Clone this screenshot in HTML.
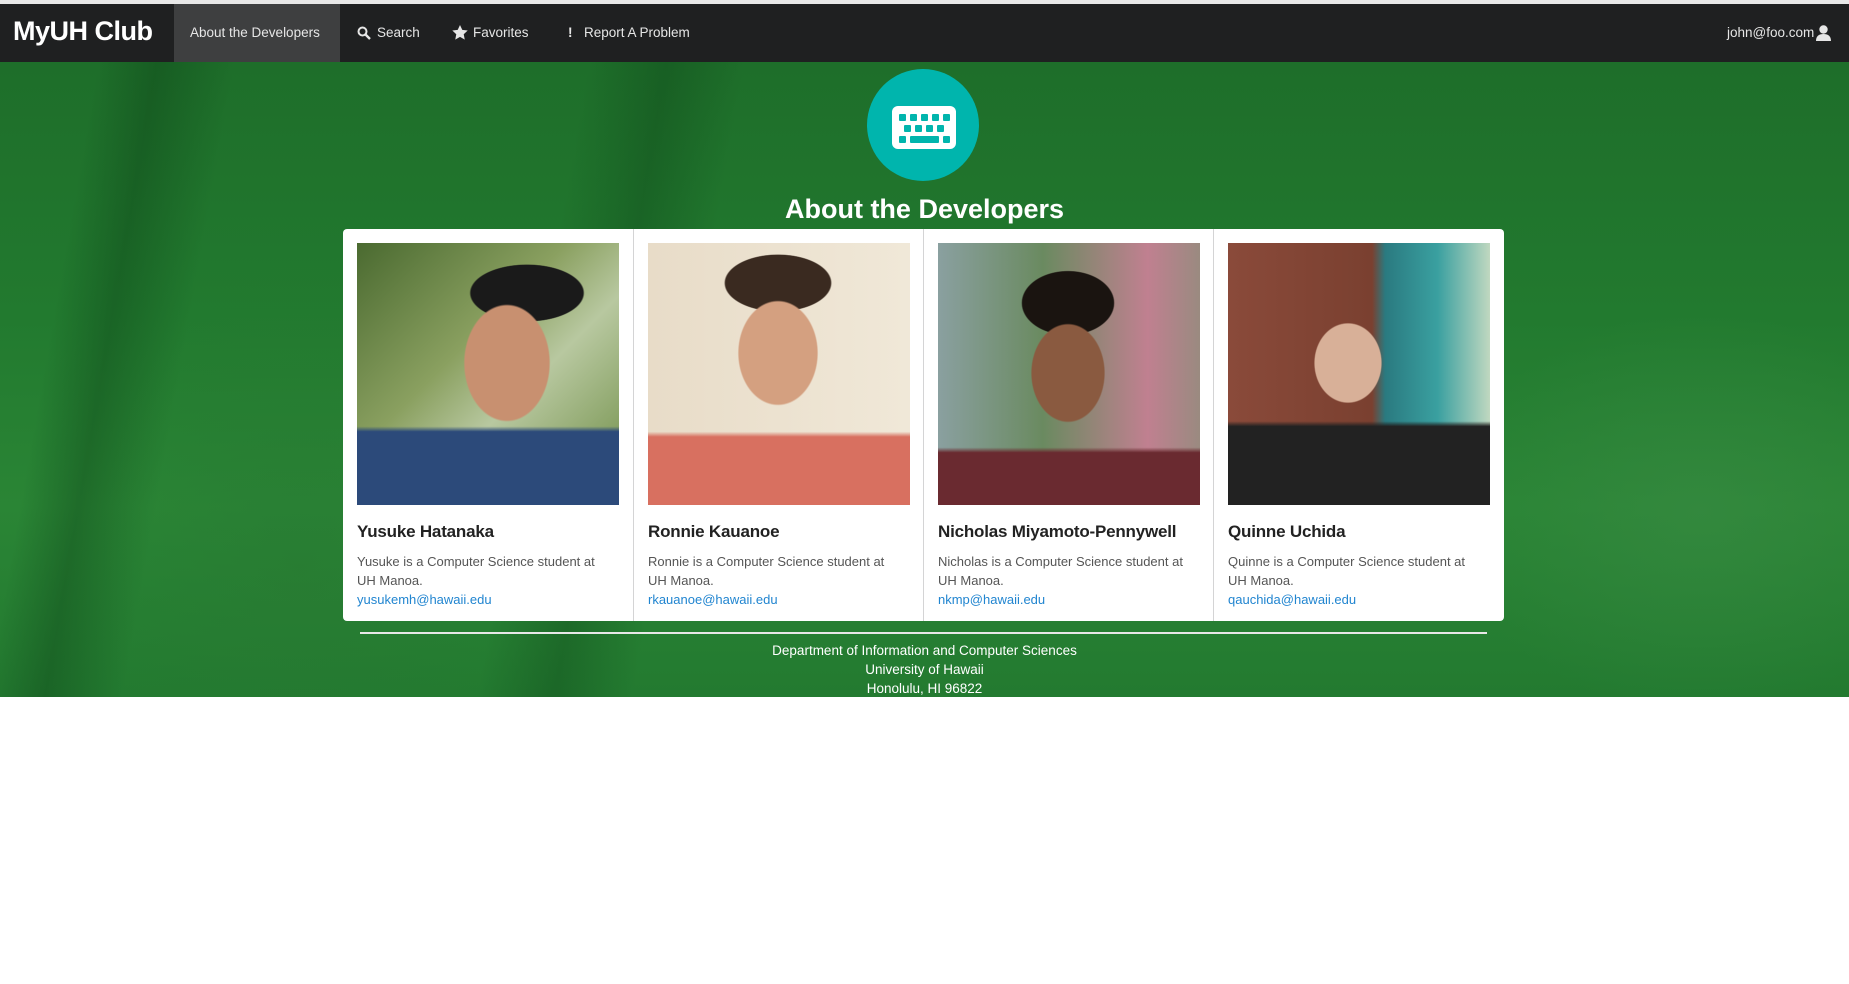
<!DOCTYPE html>
<html><head><meta charset="utf-8"><style>
*{margin:0;padding:0;box-sizing:border-box}
body{width:1849px;height:984px;background:#fff;font-family:"Liberation Sans",sans-serif;position:relative;overflow:hidden}
.top{position:absolute;left:0;top:0;width:1849px;height:4px;background:#e8e8e8}
.nav{position:absolute;left:0;top:4px;width:1849px;height:58px;background:#1f2021;color:#e6e6e6;font-size:13.5px}
.nav span{position:absolute;top:21px;white-space:nowrap}
.brand{font-size:27px!important;font-weight:bold;color:#fff;top:12px!important;left:13px;letter-spacing:-0.5px}
.active{position:absolute;left:174px;top:0;width:166px;height:58px;background:#3e3f40}
.hero{position:absolute;left:0;top:62px;width:1849px;height:635px;overflow:hidden;
background:
radial-gradient(ellipse 200px 300px at 300px 500px,rgba(40,120,50,.5),transparent),
radial-gradient(ellipse 250px 200px at 1700px 450px,rgba(60,140,70,.5),transparent),
linear-gradient(100deg,transparent 5%,rgba(10,60,20,.35) 8%,transparent 12%,transparent 30%,rgba(10,60,20,.3) 34%,transparent 38%),
linear-gradient(180deg,#1e6e2a 0%,#227a2f 40%,#2a8535 70%,#237a30 100%)}
.circle{position:absolute;left:867px;top:7px;width:112px;height:112px;border-radius:50%;background:#00b5ad}
h1{position:absolute;left:0;width:1849px;text-align:center;font-size:27px;color:#fff;font-weight:bold}
.cards{position:absolute;left:343px;top:229px;width:1161px;height:392px;background:#fff;border-radius:4px}
.card{position:absolute;top:0;width:290px;height:392px;border-left:1px solid #d4d4d5}
.card:first-child{border-left:none}
.ph{position:absolute;left:14px;top:14px;width:262px;height:262px}
.nm{position:absolute;left:14px;top:293px;font-size:17px;font-weight:bold;color:#222;white-space:nowrap;letter-spacing:-0.2px}
.ds{position:absolute;left:14px;top:323px;font-size:13px;line-height:19px;color:#555;width:250px}
.ds a{color:#2185d0;text-decoration:none}
.hr{position:absolute;left:360px;width:1127px;height:2px;background:#e8e8e8}
.ft{position:absolute;left:0;width:1849px;text-align:center;color:#fff;font-size:13.5px;line-height:19px}
</style></head><body>
<div class="top"></div>
<div class="nav">
<div class="active"></div>
<span class="brand">MyUH Club</span>
<span style="left:190px">About the Developers</span>
<svg style="position:absolute;left:357px;top:22px" width="14" height="14" viewBox="0 0 14 14"><circle cx="5.5" cy="5.5" r="4" stroke="#e6e6e6" stroke-width="2" fill="none"/><path d="M8.5 8.5L13 13" stroke="#e6e6e6" stroke-width="2.4"/></svg>
<span style="left:377px">Search</span>
<svg style="position:absolute;left:452px;top:21px" width="16" height="15" viewBox="0 0 24 23"><path d="M12 0l3.5 7.5 8.3 1-6.1 5.7 1.6 8.2L12 18.3 4.7 22.4l1.6-8.2L.2 8.5l8.3-1z" fill="#e6e6e6"/></svg>
<span style="left:473px">Favorites</span>
<span style="left:568px;font-weight:bold">!</span>
<span style="left:584px">Report A Problem</span>
<span style="left:1727px">john@foo.com</span>
<svg style="position:absolute;left:1816px;top:21px" width="15" height="16" viewBox="0 0 15 16"><circle cx="7.5" cy="4.5" r="4.2" fill="#e6e6e6"/><path d="M0 16c0-5 3-7 7.5-7S15 11 15 16z" fill="#e6e6e6"/></svg>
</div>
<div class="hero">
<div class="circle"></div>
<svg style="position:absolute;left:892px;top:44px" width="64" height="43" viewBox="0 0 64 43"><rect width="64" height="43" rx="6" fill="#fff"/>
<g fill="#00b5ad"><rect x="7" y="8" width="7" height="7" rx="1"/><rect x="18" y="8" width="7" height="7" rx="1"/><rect x="29" y="8" width="7" height="7" rx="1"/><rect x="40" y="8" width="7" height="7" rx="1"/><rect x="51" y="8" width="7" height="7" rx="1"/>
<rect x="12" y="19" width="7" height="7" rx="1"/><rect x="23" y="19" width="7" height="7" rx="1"/><rect x="34" y="19" width="7" height="7" rx="1"/><rect x="45" y="19" width="7" height="7" rx="1"/>
<rect x="7" y="30" width="7" height="7" rx="1"/><rect x="18" y="30" width="29" height="7" rx="1"/><rect x="51" y="30" width="7" height="7" rx="1"/></g></svg>
<h1 style="top:132px">About the Developers</h1>
<div class="hr" style="top:570px"></div>
<div class="ft" style="top:579px">Department of Information and Computer Sciences<br>University of Hawaii<br>Honolulu, HI 96822</div>
</div>
<div class="cards">
<div class="card" style="left:0">
<div class="ph" style="background:radial-gradient(ellipse 70px 95px at 150px 120px,#c89070 60%,transparent 62%),radial-gradient(ellipse 80px 40px at 170px 50px,#1a1a1a 70%,transparent 72%),linear-gradient(180deg,transparent 70%,#2c4a7a 72%),linear-gradient(135deg,#4a6a30,#8aa060 40%,#b8c8a0 60%,#6a8a40)"></div>
<div class="nm">Yusuke Hatanaka</div>
<div class="ds">Yusuke is a Computer Science student at UH Manoa.<br><a>yusukemh@hawaii.edu</a></div></div>
<div class="card" style="left:290px">
<div class="ph" style="background:radial-gradient(ellipse 65px 85px at 130px 110px,#d4a080 60%,transparent 62%),radial-gradient(ellipse 75px 40px at 130px 40px,#3a2a20 70%,transparent 72%),linear-gradient(180deg,transparent 72%,#d87060 74%),linear-gradient(90deg,#e8dcc8,#f0e8d8)"></div>
<div class="nm">Ronnie Kauanoe</div>
<div class="ds">Ronnie is a Computer Science student at UH Manoa.<br><a>rkauanoe@hawaii.edu</a></div></div>
<div class="card" style="left:580px">
<div class="ph" style="background:radial-gradient(ellipse 60px 80px at 130px 130px,#8a5a40 60%,transparent 62%),radial-gradient(ellipse 65px 45px at 130px 60px,#1a1410 70%,transparent 72%),linear-gradient(180deg,transparent 78%,#6a2a30 80%),linear-gradient(90deg,#8aa0a0,#6a8a60 40%,#c08090 80%,#9a8a80)"></div>
<div class="nm">Nicholas Miyamoto-Pennywell</div>
<div class="ds">Nicholas is a Computer Science student at UH Manoa.<br><a>nkmp@hawaii.edu</a></div></div>
<div class="card" style="left:870px">
<div class="ph" style="background:radial-gradient(ellipse 55px 65px at 120px 120px,#d8b098 60%,transparent 62%),linear-gradient(180deg,transparent 68%,#222 70%),linear-gradient(90deg,#8a4a3a 0%,#7a4030 55%,#2a7a80 60%,#3aa0a0 80%,#c0d8c0)"></div>
<div class="nm">Quinne Uchida</div>
<div class="ds">Quinne is a Computer Science student at UH Manoa.<br><a>qauchida@hawaii.edu</a></div></div>
</div>
</body></html>
